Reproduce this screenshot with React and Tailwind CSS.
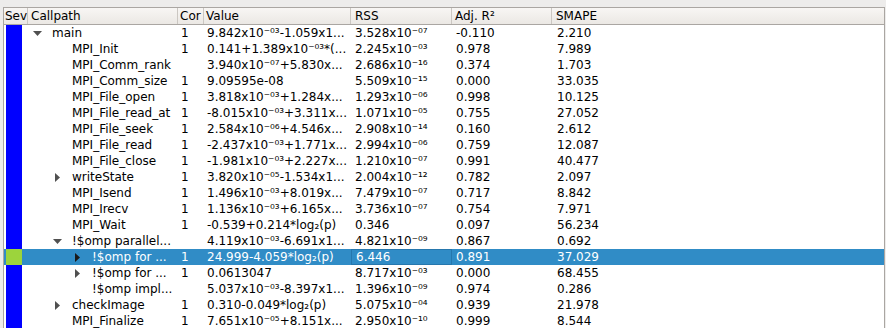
import React from "react";

const rows = [
  { name: "main", level: 0, arrow: "down", cor: "1", value: "9.842x10⁻⁰³-1.059x1...", rss: "3.528x10⁻⁰⁷", adj: "-0.110", smape: "2.210" },
  { name: "MPI_Init", level: 1, cor: "1", value: "0.141+1.389x10⁻⁰³*(...", rss: "2.245x10⁻⁰³", adj: "0.978", smape: "7.989" },
  { name: "MPI_Comm_rank", level: 1, cor: "", value: "3.940x10⁻⁰⁷+5.830x...", rss: "2.686x10⁻¹⁶", adj: "0.374", smape: "1.703" },
  { name: "MPI_Comm_size", level: 1, cor: "1", value: "9.09595e-08", rss: "5.509x10⁻¹⁵", adj: "0.000", smape: "33.035" },
  { name: "MPI_File_open", level: 1, cor: "1", value: "3.818x10⁻⁰³+1.284x...", rss: "1.293x10⁻⁰⁶", adj: "0.998", smape: "10.125" },
  { name: "MPI_File_read_at", level: 1, cor: "1", value: "-8.015x10⁻⁰³+3.311x...", rss: "1.071x10⁻⁰⁵", adj: "0.755", smape: "27.052" },
  { name: "MPI_File_seek", level: 1, cor: "1", value: "2.584x10⁻⁰⁶+4.546x...", rss: "2.908x10⁻¹⁴", adj: "0.160", smape: "2.612" },
  { name: "MPI_File_read", level: 1, cor: "1", value: "-2.437x10⁻⁰³+1.771x...", rss: "2.994x10⁻⁰⁶", adj: "0.759", smape: "12.087" },
  { name: "MPI_File_close", level: 1, cor: "1", value: "-1.981x10⁻⁰³+2.227x...", rss: "1.210x10⁻⁰⁷", adj: "0.991", smape: "40.477" },
  { name: "writeState", level: 1, arrow: "right", cor: "1", value: "3.820x10⁻⁰⁵-1.534x1...", rss: "2.004x10⁻¹²", adj: "0.782", smape: "2.097" },
  { name: "MPI_Isend", level: 1, cor: "1", value: "1.496x10⁻⁰³+8.019x...", rss: "7.479x10⁻⁰⁷", adj: "0.717", smape: "8.842" },
  { name: "MPI_Irecv", level: 1, cor: "1", value: "1.136x10⁻⁰³+6.165x...", rss: "3.736x10⁻⁰⁷", adj: "0.754", smape: "7.971" },
  { name: "MPI_Wait", level: 1, cor: "1", value: "-0.539+0.214*log₂(p)", rss: "0.346", adj: "0.097", smape: "56.234" },
  { name: "!$omp parallel...", level: 1, arrow: "down", cor: "", value: "4.119x10⁻⁰³-6.691x1...", rss: "4.821x10⁻⁰⁹", adj: "0.867", smape: "0.692" },
  { name: "!$omp for ...", level: 2, arrow: "right", cor: "1", value: "24.999-4.059*log₂(p)", rss: "6.446", adj: "0.891", smape: "37.029", selected: true },
  { name: "!$omp for ...", level: 2, arrow: "right", cor: "1", value: "0.0613047", rss: "8.717x10⁻⁰³", adj: "0.000", smape: "68.455" },
  { name: "!$omp impl...", level: 2, cor: "", value: "5.037x10⁻⁰³-8.397x1...", rss: "1.396x10⁻⁰⁹", adj: "0.974", smape: "0.286" },
  { name: "checkImage", level: 1, arrow: "right", cor: "1", value: "0.310-0.049*log₂(p)", rss: "5.075x10⁻⁰⁴", adj: "0.939", smape: "21.978" },
  { name: "MPI_Finalize", level: 1, cor: "1", value: "7.651x10⁻⁰⁵+8.151x...", rss: "2.950x10⁻¹⁰", adj: "0.999", smape: "8.544" },
];

function Arrow({ dir, selected }) {
  const fill = selected ? "#1a1a1a" : "#505050";
  if (dir === "down") {
    return (
      <svg width="9" height="5" viewBox="0 0 9 5">
        <polygon points="0,0 9,0 4.5,5" fill={fill} />
      </svg>
    );
  }
  if (dir === "right") {
    return (
      <svg width="5" height="9" viewBox="0 0 5 9">
        <polygon points="0,0 5,4.5 0,9" fill={fill} />
      </svg>
    );
  }
  return null;
}

function HeaderCell({ children, className }) {
  return (
    <div className={`h-full flex items-center border-r border-[#cbc7c2] overflow-hidden whitespace-nowrap ${className}`}>
      {children}
    </div>
  );
}

export default function App() {
  return (
    <div
      className="w-[886px] h-[328px] bg-[#edeceb] overflow-hidden text-[12px] text-black"
      style={{ fontFamily: '"DejaVu Sans", sans-serif' }}
    >
      <div className="mt-[7px] ml-[3px] w-[882px] h-[321px] border-l border-r border-t border-[#aaa6a2] bg-white overflow-hidden">
        {/* header */}
        <div className="flex h-[17px] border-b border-[#aaa6a2] bg-gradient-to-b from-[#f8f6f4] to-[#ebe8e4] leading-[16px]">
          <HeaderCell className="w-[24px] pl-[1px]">Sev</HeaderCell>
          <HeaderCell className="w-[150px] pl-[3px]">Callpath</HeaderCell>
          <HeaderCell className="w-[26px] pl-[2px]">Cor</HeaderCell>
          <HeaderCell className="w-[147px] pl-[2px]">Value</HeaderCell>
          <HeaderCell className="w-[101px] pl-[4px]">RSS</HeaderCell>
          <HeaderCell className="w-[100px] pl-[3px]">Adj. R²</HeaderCell>
          <div className="flex-1 h-full flex items-center pl-[4px] whitespace-nowrap">SMAPE</div>
        </div>
        {/* body */}
        <div className="flex flex-col">
          {rows.map((r, i) => {
            const sel = r.selected;
            return (
              <div
                key={i}
                className={`flex h-[16px] leading-[16px] whitespace-nowrap ${sel ? "bg-[#308cc6] text-white" : ""}`}
              >
                <div className="w-[24px] h-full pl-[2px]">
                  <div className={`w-[16px] h-full ${sel ? "bg-[#9cd43c]" : "bg-[#0000ff]"}`} />
                </div>
                <div className="w-[150px] h-full flex items-center overflow-hidden">
                  <div style={{ width: 4 + r.level * 20 }} className="shrink-0" />
                  <div className="w-[10px] shrink-0 flex items-center justify-center">
                    {r.arrow && <Arrow dir={r.arrow} selected={sel} />}
                  </div>
                  <div className="w-[10px] shrink-0" />
                  <span>{r.name}</span>
                </div>
                <div className="w-[26px] h-full pl-[3px] overflow-hidden">{r.cor}</div>
                <div className="w-[147px] h-full pl-[3px] overflow-hidden">{r.value}</div>
                <div className={`w-[101px] h-full pl-[4px] overflow-hidden ${sel ? "border border-[#2677ad] pl-[3px] leading-[14px]" : ""}`}>{r.rss}</div>
                <div className="w-[100px] h-full pl-[4px] overflow-hidden">{r.adj}</div>
                <div className="flex-1 h-full pl-[5px] overflow-hidden">{r.smape}</div>
              </div>
            );
          })}
        </div>
      </div>
    </div>
  );
}
